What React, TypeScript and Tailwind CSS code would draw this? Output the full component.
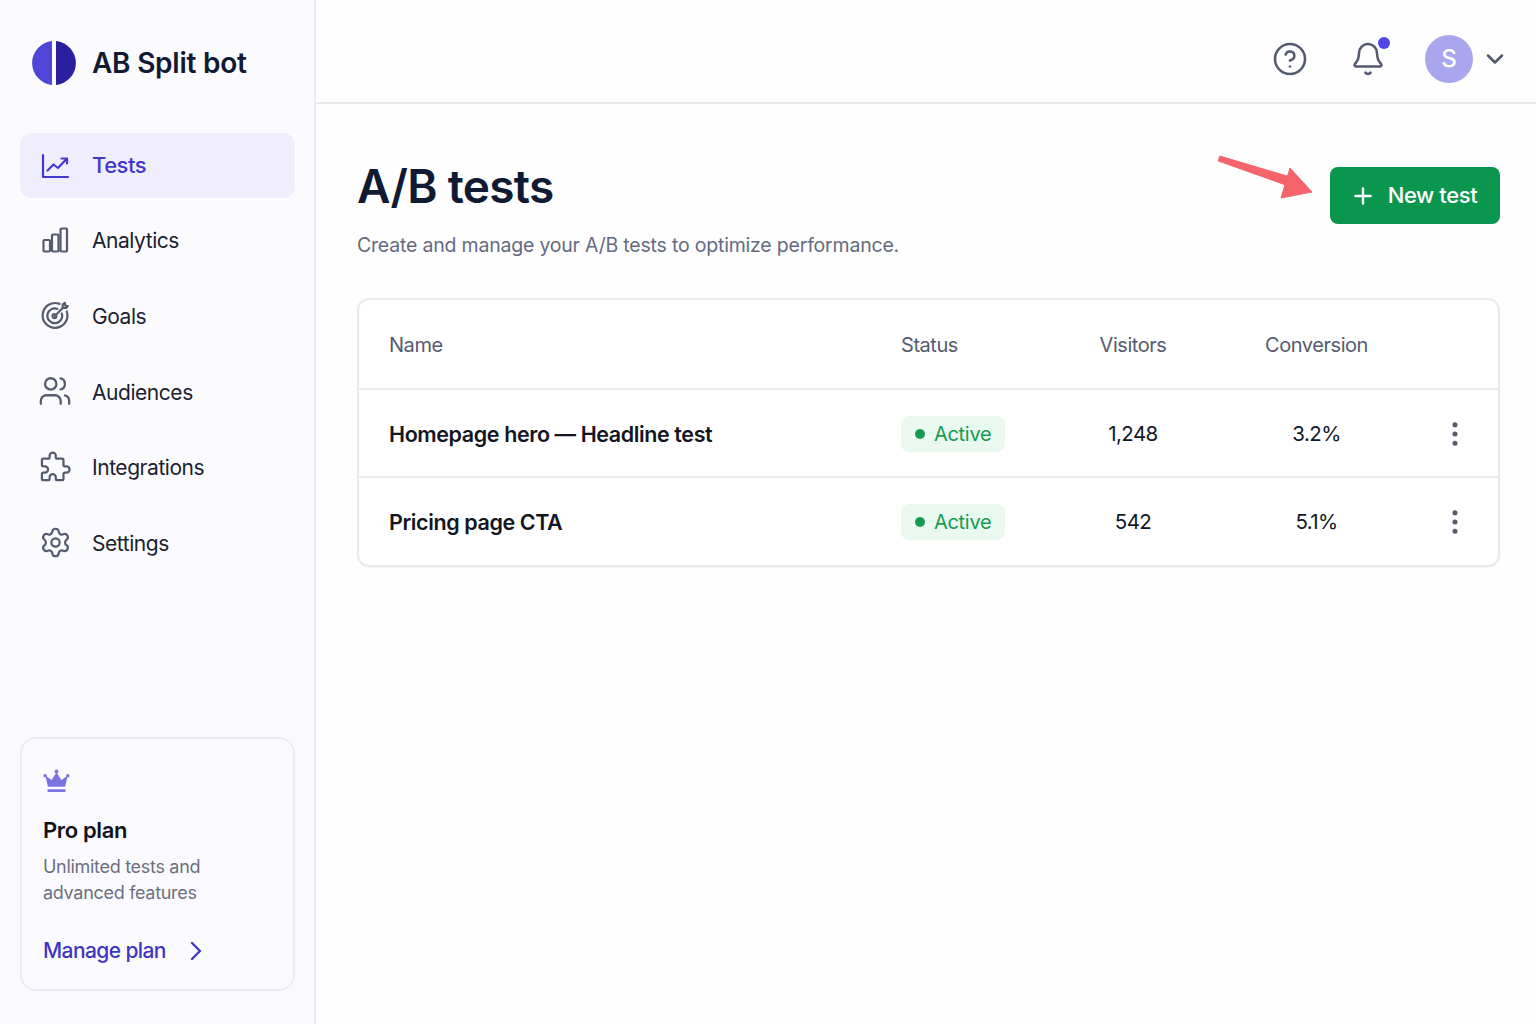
import React from 'react';
import { Bell, ChevronDown, ChevronRight, CircleHelp, MoreVertical, Plus, Settings, Users } from 'lucide-react';

// --- Hand-drawn icons ---
const TestsIcon = () => (
  <svg viewBox="0 0 28 28" className="h-7 w-7" fill="none" stroke="currentColor" strokeWidth="2.2" strokeLinecap="round" strokeLinejoin="round">
    <path d="M2 3v22h25" />
    <path d="M6.500 18.500l6-6 4.500 3.500 8-8.500" />
    <path d="M20.500 6.500h5.500v5" />
  </svg>
);

const AnalyticsIcon = () => (
  <svg viewBox="0 1 28 28" className="h-7 w-7" fill="none" stroke="currentColor" strokeWidth="2.200" strokeLinejoin="round">
    <rect x="2.500" y="14" width="6.500" height="11.500" rx="1" />
    <rect x="11" y="8.500" width="6.500" height="17" rx="1" />
    <rect x="19.500" y="2.500" width="6.500" height="23" rx="1" />
  </svg>
);

const GoalsIcon = () => (
  <svg viewBox="0 1.500 28 28" className="h-7 w-7 overflow-visible" fill="none" stroke="currentColor" strokeWidth="2.200" strokeLinecap="round" strokeLinejoin="round">
    <path d="M18.500 2.400A12.400 12.400 0 1 0 25.800 10" />
    <path d="M16.500 7.400A7.400 7.400 0 1 0 20.800 12" />
    <path d="M13.500 12.600a2 2 0 1 0 2 2" />
    <path d="M14 14.200l8-8" />
    <path d="M21.500 6.500l.3-3.600 2-1.400.4 2.600 2.600.4-1.600 2-3.700 0z" />
  </svg>
);

const PuzzleIcon = () => (
  <svg viewBox="2 3.300 19 19.500" className="h-[30px] w-[30px] flex-none overflow-visible" fill="none" stroke="currentColor" strokeWidth="1.450" strokeLinecap="round" strokeLinejoin="round">
    <path d="M4 7h3a1 1 0 0 0 1-1v-1a2 2 0 0 1 4 0v1a1 1 0 0 0 1 1h3a1 1 0 0 1 1 1v3a1 1 0 0 0 1 1h1a2 2 0 0 1 0 4h-1a1 1 0 0 0-1 1v3a1 1 0 0 1-1 1h-3a1 1 0 0 1-1-1v-1a2 2 0 0 0-4 0v1a1 1 0 0 1-1 1h-3a1 1 0 0 1-1-1v-3a1 1 0 0 1 1-1h1a2 2 0 0 0 0-4h-1a1 1 0 0 1-1-1v-3a1 1 0 0 1 1-1" />
  </svg>
);

const CrownIcon = () => (
  <svg viewBox="0 0 28 26" className="h-[25px] w-[27px]" fill="#7b74e0">
    <circle cx="14" cy="2.500" r="2" />
    <circle cx="2.200" cy="7" r="1.800" />
    <circle cx="25.800" cy="7" r="1.800" />
    <path d="M14 3.500l5 8 6.500-4.500-2.500 11.500H5L2.500 7 9 11.500z" />
    <rect x="4.500" y="21" width="19" height="2.800" rx="1" />
  </svg>
);

// --- Static data ---
const navItems = [
  { label: 'Tests', icon: <TestsIcon />, active: true },
  { label: 'Analytics', icon: <AnalyticsIcon /> },
  { label: 'Goals', icon: <GoalsIcon /> },
  { label: 'Audiences', icon: <Users className="mb-0.5 h-[34px] w-[34px] flex-none" strokeWidth={1.6} /> },
  { label: 'Integrations', icon: <PuzzleIcon /> },
  { label: 'Settings', icon: <Settings className="mb-0.5 h-[33px] w-[33px] flex-none" strokeWidth={1.6} /> },
];

const tests = [
  { name: 'Homepage hero — Headline test', visitors: '1,248', conversion: '3.2%' },
  { name: 'Pricing page CTA', visitors: '542', conversion: '5.1%' },
];

const rowGrid = 'grid grid-cols-[512px_165px_134px_233px_44px] items-center pl-[30px]';

export default function App() {
  return (
    <div className="flex h-[1024px] w-[1536px] overflow-hidden bg-[#fefefe] font-['Inter',sans-serif] text-[#111827]">
      {/* Sidebar */}
      <aside className="flex w-[316px] flex-none flex-col border-r-2 border-[#eaeaf0] bg-[#fbfbfe] pb-[33px] pl-5 pr-[19px]">
        <div className="flex h-[133px] flex-none items-start pl-3 pt-[41px]">
          <svg viewBox="0 0 44 44" className="h-11 w-11 flex-none">
            <path d="M20 .1A22 22 0 0 0 20 43.900z" fill="#4f46d8" />
            <path d="M24 .1A22 22 0 0 1 24 43.900z" fill="#2a1f9e" />
          </svg>
          <span className="ml-4 text-[28px] font-semibold leading-[44px] tracking-[-0.25px] text-[#111a33]">AB Split bot</span>
        </div>

        <nav className="flex flex-col gap-[10.6px]">
          {navItems.map((item) => (
            <a
              key={item.label}
              className={`flex h-[65px] items-center rounded-xl pl-[21px] ${item.active ? 'bg-[#f0eefd] text-[#4338ca]' : 'text-[#555b6e]'}`}
            >
              <span className="flex h-7 w-7 flex-none items-center justify-center">{item.icon}</span>
              <span className={`ml-[23px] ${item.active ? 'text-[22px] font-medium tracking-[-0.5px]' : 'text-[21px] tracking-[-0.45px] text-[#1c2130]'}`}>
                {item.label}
              </span>
            </a>
          ))}
        </nav>

        {/* Plan card */}
        <div className="mt-auto flex h-[254px] flex-col rounded-2xl border-2 border-[#ecebf7] bg-[#fbfbff] px-[21px] pt-[30px]">
          <CrownIcon />
          <div className="mt-5 text-[22px] font-semibold leading-8 tracking-[-0.35px] text-[#111318]">Pro plan</div>
          <p className="mt-2 text-[18px] leading-[26px] tracking-[-0.3px] text-[#6b7080]">
            Unlimited tests and
            <br />
            advanced features
          </p>
          <div className="mt-[29px] flex items-center text-[#4034c4]">
            <span className="text-[21px] font-medium tracking-[-0.6px]">Manage plan</span>
            <ChevronRight className="ml-[14px] h-8 w-8" strokeWidth={1.7} />
          </div>
        </div>
      </aside>

      <div className="flex min-w-0 flex-1 flex-col">
        {/* Top bar */}
        <header className="flex h-[104px] flex-none items-center border-b-2 border-[#eaeaee] pr-[27px] pt-[15px]">
          <div className="ml-auto flex items-center text-[#555b6e]">
            <CircleHelp className="h-9 w-9" strokeWidth={1.7} />
            <div className="relative ml-[42px]">
              <Bell className="h-9 w-9" strokeWidth={1.7} />
              <span className="absolute -top-1 right-[-4px] h-3 w-3 rounded-full bg-[#4f46e5]" />
            </div>
            <div className="ml-[39px] flex h-12 w-12 items-center justify-center rounded-full bg-[#aaa6ee] text-[24px] font-medium text-white">S</div>
            <ChevronDown className="ml-2 h-7 w-7" strokeWidth={2.2} />
          </div>
        </header>

        <main className="flex-1 pl-[41px] pr-9">
          <div className="flex items-start justify-between pt-[54px]">
            <div>
              <h1 className="text-[46px] font-semibold leading-[56px] tracking-[-0.7px] text-[#111a33]">A/B tests</h1>
              <p className="mt-4 text-[19.500px] leading-[30px] tracking-[-0.2px] text-[#646b80]">
                Create and manage your A/B tests to optimize performance.
              </p>
            </div>
            <div className="relative mt-[9px]">
              {/* Annotation arrow */}
              <svg viewBox="0 0 100 46" className="absolute left-[-116px] top-[-12px] h-[46px] w-[100px]">
                <path d="M5.800 1.100L75.400 21.700 72.600 30.300 4.200 5.900z" fill="#f4646a" stroke="#f4646a" strokeWidth="1" strokeLinejoin="round" />
                <path d="M76 13L98 37 67 43z" fill="#f4646a" stroke="#f4646a" strokeWidth="1" strokeLinejoin="round" />
              </svg>
              <button className="flex h-[57px] w-[170px] items-center justify-center rounded-lg bg-[#0b9650] pr-[3px] text-[22px] font-medium tracking-[-0.4px] text-white">
                <Plus className="mr-[12px] h-[26px] w-[26px]" strokeWidth={2.2} />
                New test
              </button>
            </div>
          </div>

          {/* Tests table */}
          <div className="mt-[38px] rounded-xl border-2 border-[#e9e9ee] bg-white shadow-[0_1px_2px_rgba(0,0,0,0.03)]">
            <div className={`${rowGrid} h-[90px] border-b-2 border-[#e9e9ee] pt-px text-[20px] tracking-[-0.45px] text-[#565b70]`}>
              <div>Name</div>
              <div>Status</div>
              <div className="text-center">Visitors</div>
              <div className="text-center">Conversion</div>
            </div>
            {tests.map((test, i) => (
              <div key={test.name} className={`${rowGrid} ${i === 0 ? 'h-[88px] border-b-2 border-[#e9e9ee] pt-[2px]' : 'h-[87px] pt-px'}`}>
                <div className="text-[21.500px] font-semibold tracking-[-0.4px] text-[#14161f]">{test.name}</div>
                <div>
                  <span className="inline-flex h-9 w-[104px] items-center rounded-lg bg-[#e9f9ef] pl-[14px] text-[20px] tracking-[-0.3px] text-[#169a52]">
                    <span className="mr-[9px] h-[10px] w-[10px] rounded-full bg-[#169a52]" />
                    Active
                  </span>
                </div>
                <div className="text-center text-[20.500px] tracking-[-0.6px]">{test.visitors}</div>
                <div className="text-center text-[20.500px] tracking-[-0.6px]">{test.conversion}</div>
                <div className="flex justify-center text-[#555b6e]">
                  <MoreVertical className="h-8 w-8" strokeWidth={1.8} />
                </div>
              </div>
            ))}
          </div>
        </main>
      </div>
    </div>
  );
}
